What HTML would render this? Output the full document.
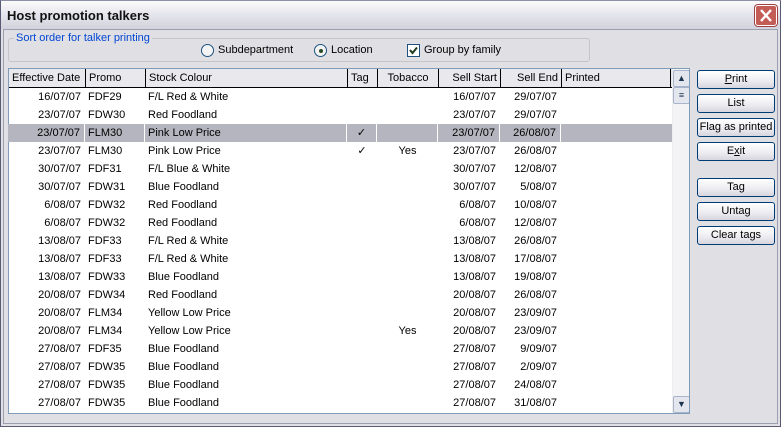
<!DOCTYPE html>
<html><head><style>
*{margin:0;padding:0;box-sizing:border-box}
body{width:781px;height:427px;overflow:hidden;background:#e0dfe3;font-family:"Liberation Sans",Tahoma,sans-serif;font-size:11px;color:#000;position:relative}
.a{position:absolute}
.win{left:0;top:0;width:781px;height:427px;border:1px solid #585b73;border-top-color:#8c8fa6}
.inner{left:3px;top:29px;width:775px;height:395px;border:1px solid #9c9fb0}
.title{left:1px;top:1px;width:779px;height:28px;background:linear-gradient(#fbfbfc,#e4e4ec 50%,#d2d2dc);}
.title span{position:absolute;left:6px;top:7px;font-weight:bold;font-size:13px;color:#111}
.close{left:755px;top:5px;width:22px;height:21px;background:#c45c56;border:1px solid #fff;border-radius:3px;box-shadow:0 0 0 1px #a04040}
.grp{left:8px;top:38px;width:582px;height:24px;border:1px solid #c5c4c8;border-radius:3px}
.grpl{left:14px;top:32px;background:#e0dfe3;color:#0046d5;padding:0 2px;font-size:11px}
.lb{left:8px;top:68px;width:682px;height:346px;border:1px solid #7f9db9;background:#fff;overflow:hidden}
.hd{top:0;height:19px;border-bottom:1px solid #000;background:#e9e8ec;width:664px;left:0}
.hc{top:0;height:18px;border-right:1px solid #000;line-height:18px;font-size:11px;padding:0 3px;white-space:nowrap}
.row{left:0;width:664px;height:18px;font-size:11px;line-height:18px}
.row span{position:absolute;top:0;height:18px;white-space:nowrap}
.sel{background:#b4b5be}
.sel span{border-right:1px solid #fff}
.r{text-align:right}
.c{text-align:center}
.sb{left:663px;top:0;width:18px;height:344px;background:#f3f3f6;border-left:1px solid #eee}
.sbb{left:664px;width:17px;height:17px;border:1px solid #a8b4cc;border-radius:2px;background:#e4e6ee;text-align:center;font-size:9px;line-height:15px;color:#1c3450}
.btn{left:697px;width:78px;height:19px;border:1px solid #003c74;border-radius:3px;background:linear-gradient(#fff,#ecebf0 60%,#d6d5de);text-align:center;font-size:11px;line-height:17px;white-space:nowrap}
.radio{width:13px;height:13px;border:1px solid #1c5180;border-radius:50%;background:#f4f4f4}
</style></head><body>
<div class="a win"></div>
<div class="a title"><span>Host promotion talkers</span></div>
<div class="a close"><svg width="20" height="19" viewBox="0 0 20 19"><path d="M5 4L15 15M15 4L5 15" stroke="#fff" stroke-width="2.4"/></svg></div>
<div class="a inner"></div>
<div class="a grp"></div>
<div class="a grpl">Sort order for talker printing</div>
<div class="a radio" style="left:201px;top:44px"></div>
<div class="a" style="left:218px;top:44px">Subdepartment</div>
<div class="a radio" style="left:314px;top:44px"><div class="a" style="left:4px;top:4px;width:4px;height:4px;background:#2a4a2a;border-radius:50%"></div></div>
<div class="a" style="left:331px;top:44px">Location</div>
<div class="a" style="left:407px;top:44px;width:13px;height:13px;border:1px solid #1c5180;background:#fff"><svg width="11" height="11" viewBox="0 0 11 11" style="position:absolute;left:0;top:0"><path d="M2 5L4.5 8L9 2.5" stroke="#1f3a1f" stroke-width="2" fill="none"/></svg></div>
<div class="a" style="left:424px;top:44px">Group by family</div>

<div class="a lb">
<div class="a hd">
<div class="a hc" style="left:0;width:77px">Effective Date</div>
<div class="a hc" style="left:77px;width:60px">Promo</div>
<div class="a hc" style="left:137px;width:202px">Stock Colour</div>
<div class="a hc" style="left:339px;width:30px">Tag</div>
<div class="a hc c" style="left:369px;width:61px">Tobacco</div>
<div class="a hc r" style="left:430px;width:62px">Sell Start</div>
<div class="a hc r" style="left:492px;width:61px">Sell End</div>
<div class="a hc" style="left:553px;width:109px">Printed</div>
</div>
<div class="a sb"></div>
<div class="a sbb" style="top:1px">&#9650;</div>
<div class="a sbb" style="top:18px;height:17px">&#8801;</div>
<div class="a sbb" style="top:327px">&#9660;</div>
</div>

<div class="a btn" style="top:70px"><u>P</u>rint</div>
<div class="a btn" style="top:94px">List</div>
<div class="a btn" style="top:118px">Flag as printed</div>
<div class="a btn" style="top:142px">E<u>x</u>it</div>
<div class="a btn" style="top:178px">Tag</div>
<div class="a btn" style="top:202px">Untag</div>
<div class="a btn" style="top:226px">Clear tags</div>

<div class="a lb" style="background:transparent;border:none;top:69px">
<div class="a row" style="top:19px"><span class="r" style="left:0;width:73px">16/07/07</span><span style="left:80px">FDF29</span><span style="left:140px">F/L Red &amp; White</span><span class="r" style="left:430px;width:58px">16/07/07</span><span class="r" style="left:492px;width:57px">29/07/07</span></div>
<div class="a row" style="top:37px"><span class="r" style="left:0;width:73px">23/07/07</span><span style="left:80px">FDW30</span><span style="left:140px">Red Foodland</span><span class="r" style="left:430px;width:58px">23/07/07</span><span class="r" style="left:492px;width:57px">29/07/07</span></div>
<div class="a row sel" style="top:55px"><span class="r" style="left:0;width:77px;padding-right:4px">23/07/07</span><span style="left:77px;width:60px;padding-left:3px">FLM30</span><span style="left:137px;width:202px;padding-left:3px">Pink Low Price</span><span class="c" style="left:339px;width:30px">&#10003;</span><span style="left:369px;width:61px"></span><span class="r" style="left:430px;width:62px;padding-right:4px">23/07/07</span><span class="r" style="left:492px;width:61px;padding-right:4px">26/08/07</span></div>
<div class="a row" style="top:73px"><span class="r" style="left:0;width:73px">23/07/07</span><span style="left:80px">FLM30</span><span style="left:140px">Pink Low Price</span><span class="c" style="left:339px;width:30px">&#10003;</span><span class="c" style="left:369px;width:61px">Yes</span><span class="r" style="left:430px;width:58px">23/07/07</span><span class="r" style="left:492px;width:57px">26/08/07</span></div>
<div class="a row" style="top:91px"><span class="r" style="left:0;width:73px">30/07/07</span><span style="left:80px">FDF31</span><span style="left:140px">F/L Blue &amp; White</span><span class="r" style="left:430px;width:58px">30/07/07</span><span class="r" style="left:492px;width:57px">12/08/07</span></div>
<div class="a row" style="top:109px"><span class="r" style="left:0;width:73px">30/07/07</span><span style="left:80px">FDW31</span><span style="left:140px">Blue Foodland</span><span class="r" style="left:430px;width:58px">30/07/07</span><span class="r" style="left:492px;width:57px">5/08/07</span></div>
<div class="a row" style="top:127px"><span class="r" style="left:0;width:73px">6/08/07</span><span style="left:80px">FDW32</span><span style="left:140px">Red Foodland</span><span class="r" style="left:430px;width:58px">6/08/07</span><span class="r" style="left:492px;width:57px">10/08/07</span></div>
<div class="a row" style="top:145px"><span class="r" style="left:0;width:73px">6/08/07</span><span style="left:80px">FDW32</span><span style="left:140px">Red Foodland</span><span class="r" style="left:430px;width:58px">6/08/07</span><span class="r" style="left:492px;width:57px">12/08/07</span></div>
<div class="a row" style="top:163px"><span class="r" style="left:0;width:73px">13/08/07</span><span style="left:80px">FDF33</span><span style="left:140px">F/L Red &amp; White</span><span class="r" style="left:430px;width:58px">13/08/07</span><span class="r" style="left:492px;width:57px">26/08/07</span></div>
<div class="a row" style="top:181px"><span class="r" style="left:0;width:73px">13/08/07</span><span style="left:80px">FDF33</span><span style="left:140px">F/L Red &amp; White</span><span class="r" style="left:430px;width:58px">13/08/07</span><span class="r" style="left:492px;width:57px">17/08/07</span></div>
<div class="a row" style="top:199px"><span class="r" style="left:0;width:73px">13/08/07</span><span style="left:80px">FDW33</span><span style="left:140px">Blue Foodland</span><span class="r" style="left:430px;width:58px">13/08/07</span><span class="r" style="left:492px;width:57px">19/08/07</span></div>
<div class="a row" style="top:217px"><span class="r" style="left:0;width:73px">20/08/07</span><span style="left:80px">FDW34</span><span style="left:140px">Red Foodland</span><span class="r" style="left:430px;width:58px">20/08/07</span><span class="r" style="left:492px;width:57px">26/08/07</span></div>
<div class="a row" style="top:235px"><span class="r" style="left:0;width:73px">20/08/07</span><span style="left:80px">FLM34</span><span style="left:140px">Yellow Low Price</span><span class="r" style="left:430px;width:58px">20/08/07</span><span class="r" style="left:492px;width:57px">23/09/07</span></div>
<div class="a row" style="top:253px"><span class="r" style="left:0;width:73px">20/08/07</span><span style="left:80px">FLM34</span><span style="left:140px">Yellow Low Price</span><span class="c" style="left:369px;width:61px">Yes</span><span class="r" style="left:430px;width:58px">20/08/07</span><span class="r" style="left:492px;width:57px">23/09/07</span></div>
<div class="a row" style="top:271px"><span class="r" style="left:0;width:73px">27/08/07</span><span style="left:80px">FDF35</span><span style="left:140px">Blue Foodland</span><span class="r" style="left:430px;width:58px">27/08/07</span><span class="r" style="left:492px;width:57px">9/09/07</span></div>
<div class="a row" style="top:289px"><span class="r" style="left:0;width:73px">27/08/07</span><span style="left:80px">FDW35</span><span style="left:140px">Blue Foodland</span><span class="r" style="left:430px;width:58px">27/08/07</span><span class="r" style="left:492px;width:57px">2/09/07</span></div>
<div class="a row" style="top:307px"><span class="r" style="left:0;width:73px">27/08/07</span><span style="left:80px">FDW35</span><span style="left:140px">Blue Foodland</span><span class="r" style="left:430px;width:58px">27/08/07</span><span class="r" style="left:492px;width:57px">24/08/07</span></div>
<div class="a row" style="top:325px;height:12px;overflow:hidden"><span class="r" style="left:0;width:73px">27/08/07</span><span style="left:80px">FDW35</span><span style="left:140px">Blue Foodland</span><span class="r" style="left:430px;width:58px">27/08/07</span><span class="r" style="left:492px;width:57px">31/08/07</span></div>
</div>
</body></html>
